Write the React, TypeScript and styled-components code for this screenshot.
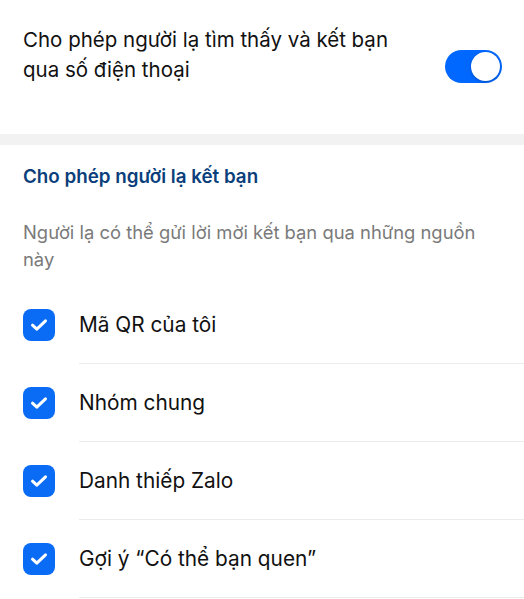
import React from "react";
import styled, { createGlobalStyle } from "styled-components";

const GlobalStyle = createGlobalStyle`
  html, body {
    margin: 0;
    padding: 0;
    background: #ffffff;
  }
  body {
    font-family: Inter, "Noto Sans", "Liberation Sans", sans-serif;
    -webkit-font-smoothing: antialiased;
  }
`;

const Page = styled.div`
  width: 524px;
  min-height: 599px;
  background: #ffffff;
  overflow: hidden;
`;

const TopRow = styled.div`
  display: flex;
  align-items: flex-start;
  justify-content: space-between;
  height: 134px;
  box-sizing: border-box;
  padding: 25px 22px 0 23px;
`;

const TopLabel = styled.div`
  font-size: 20.5px;
  line-height: 30px;
  color: #111111;
  width: 380px;
`;

const Toggle = styled.div<{ $on: boolean }>`
  position: relative;
  width: 57px;
  height: 33px;
  margin-top: 25px;
  border-radius: 17px;
  background: ${(p) => (p.$on ? "#0068ff" : "#e5e5ea")};
  flex-shrink: 0;

  &::after {
    content: "";
    position: absolute;
    top: 2px;
    left: ${(p) => (p.$on ? "26px" : "2px")};
    width: 29px;
    height: 29px;
    border-radius: 50%;
    background: #ffffff;
    box-shadow: 0 1px 3px rgba(0, 0, 0, 0.25);
  }
`;

const Band = styled.div`
  height: 11px;
  background: #f2f2f2;
`;

const Section = styled.section`
  padding-top: 20px;
`;

const Heading = styled.h2`
  margin: 0;
  padding: 0 23px;
  font-size: 18.8px;
  line-height: 24px;
  font-weight: 600;
  color: #0b3f7c;
`;

const Hint = styled.p`
  margin: 30px 0 0;
  padding: 0 23px;
  font-size: 18.4px;
  line-height: 27px;
  color: #7a7a7a;
`;

const List = styled.ul`
  list-style: none;
  margin: 13px 0 0;
  padding: 0;
`;

const Item = styled.li`
  display: flex;
  align-items: center;
  height: 78px;
  padding-left: 23px;
`;

const Box = styled.span`
  display: flex;
  align-items: center;
  justify-content: center;
  width: 32px;
  height: 32px;
  border-radius: 8px;
  background: #0a6cf5;
  flex-shrink: 0;
`;

const ItemLabel = styled.span`
  flex: 1;
  display: flex;
  align-items: center;
  align-self: stretch;
  margin-left: 24px;
  border-bottom: 1px solid #ececec;
  font-size: 20.8px;
  color: #111111;
`;

const Check = () => (
  <svg width="18" height="14" viewBox="0 0 18 14" fill="none">
    <path
      d="M2.5 7.2 L6.8 11.2 L15.5 2.8"
      stroke="#ffffff"
      strokeWidth="3"
      strokeLinecap="round"
      strokeLinejoin="round"
    />
  </svg>
);

const sources = [
  "Mã QR của tôi",
  "Nhóm chung",
  "Danh thiếp Zalo",
  "Gợi ý “Có thể bạn quen”",
];

export default function App() {
  return (
    <Page>
      <GlobalStyle />
      <TopRow>
        <TopLabel>Cho phép người lạ tìm thấy và kết bạn qua số điện thoại</TopLabel>
        <Toggle $on />
      </TopRow>
      <Band />
      <Section>
        <Heading>Cho phép người lạ kết bạn</Heading>
        <Hint>Người lạ có thể gửi lời mời kết bạn qua những nguồn này</Hint>
        <List>
          {sources.map((s) => (
            <Item key={s}>
              <Box>
                <Check />
              </Box>
              <ItemLabel>{s}</ItemLabel>
            </Item>
          ))}
        </List>
      </Section>
    </Page>
  );
}
